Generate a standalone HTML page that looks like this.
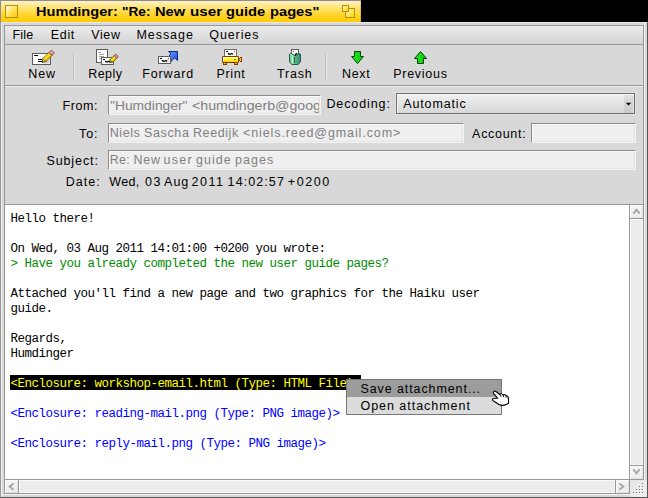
<!DOCTYPE html>
<html><head><meta charset="utf-8">
<style>
*{margin:0;padding:0;box-sizing:border-box}
html,body{width:648px;height:498px;overflow:hidden;background:#000}
body{position:relative;font-family:"Liberation Sans",sans-serif;font-size:12px;color:#000}
.a{position:absolute}
.t{position:absolute;white-space:pre;transform-origin:0 0;line-height:14px;font-size:12px}
.m{position:absolute;white-space:pre;font-family:"Liberation Mono",monospace;font-size:12.5px;line-height:15px;letter-spacing:-0.5011px}
.fld{position:absolute;background:#efefef;border-top:1px solid #8c8c8c;border-left:1px solid #8c8c8c;border-bottom:1px solid #f4f4f4;border-right:1px solid #f4f4f4;box-shadow:inset 1px 1px 0 #f8f8f8,inset -1px -1px 0 #e4e4e4}
svg{position:absolute;overflow:visible}
</style></head><body>
<div class="a" style="left:0;top:0;width:361px;height:22px;background:#8c8c94"></div>
<div class="a" style="left:1px;top:1px;width:359px;height:21px;background:linear-gradient(#fff2c4 0%,#ffe47a 30%,#ffd633 62%,#ffca00 100%)"></div>
<div class="a" style="left:360px;top:1px;width:1px;height:21px;background:linear-gradient(#e8d898,#d8a800)"></div>
<div class="a" style="left:5px;top:5px;width:13px;height:13px;border:1px solid #b89000;background:linear-gradient(135deg,#fffff4,#ffe050 55%,#ffc800)"></div>
<div class="t" style="left:35.73px;top:5px;color:#000;transform:scaleX(1.1662);font-size:12.5px;font-weight:bold;">Humdinger:</div>
<div class="t" style="left:121.71px;top:5px;color:#000;transform:scaleX(1.0917);font-size:12.5px;font-weight:bold;">"Re:</div>
<div class="t" style="left:154.63px;top:5px;color:#000;transform:scaleX(1.1720);font-size:12.5px;font-weight:bold;">New</div>
<div class="t" style="left:189.58px;top:5px;color:#000;transform:scaleX(1.2200);font-size:12.5px;font-weight:bold;">user</div>
<div class="t" style="left:225.92px;top:5px;color:#000;transform:scaleX(1.1750);font-size:12.5px;font-weight:bold;">guide</div>
<div class="t" style="left:270.12px;top:5px;color:#000;transform:scaleX(1.1750);font-size:12.5px;font-weight:bold;">pages"</div>
<div class="a" style="left:345px;top:8px;width:10px;height:10px;border:1px solid #b89000;background:linear-gradient(135deg,#fff6c8,#ffd000)"></div>
<div class="a" style="left:342px;top:5px;width:7px;height:7px;border:1px solid #b89000;background:linear-gradient(135deg,#fff6c8,#ffd000)"></div>
<div class="a" style="left:0;top:22px;width:648px;height:476px;background:#d8d8d8;border-left:1px solid #989898;border-top:1px solid #989898;border-right:1px solid #555;border-bottom:1px solid #555"></div>
<div class="a" style="left:1px;top:22px;width:646px;height:1px;background:#e6e6ee"></div>
<div class="a" style="left:1px;top:23px;width:1px;height:474px;background:#f0f0f0"></div>
<div class="a" style="left:644px;top:23px;width:1px;height:474px;background:#f2f2f2"></div>
<div class="a" style="left:1px;top:494px;width:646px;height:1px;background:#f2f2f2"></div>
<div class="a" style="left:4px;top:25px;width:640px;height:469px;background:#989898"></div>
<div class="a" style="left:5px;top:26px;width:638px;height:18px;background:linear-gradient(#ececec,#d4d4d4)"></div>
<div class="t" style="left:12.50px;top:28px;color:#000;letter-spacing:0.200px;font-size:12.5px;font-weight:normal;">File</div>
<div class="t" style="left:50.70px;top:28px;color:#000;letter-spacing:0.700px;font-size:12.5px;font-weight:normal;">Edit</div>
<div class="t" style="left:91.20px;top:28px;color:#000;letter-spacing:0.633px;font-size:12.5px;font-weight:normal;">View</div>
<div class="t" style="left:136.40px;top:28px;color:#000;letter-spacing:0.967px;font-size:12.5px;font-weight:normal;">Message</div>
<div class="t" style="left:209.30px;top:28px;color:#000;letter-spacing:0.900px;font-size:12.5px;font-weight:normal;">Queries</div>
<div class="a" style="left:5px;top:45px;width:638px;height:40px;background:#d8d8d8"></div>
<div class="a" style="left:5px;top:86px;width:638px;height:1px;background:#f0f0f0"></div>
<div class="a" style="left:73px;top:52px;width:1px;height:28px;background:#c0c0c0;box-shadow:1px 0 0 #e4e4e4"></div>
<div class="a" style="left:325px;top:52px;width:1px;height:28px;background:#c0c0c0;box-shadow:1px 0 0 #e4e4e4"></div>
<div class="t" style="left:28.25px;top:67px;color:#000;letter-spacing:0.875px;font-size:12.5px;font-weight:normal;">New</div>
<div class="t" style="left:88.25px;top:67px;color:#000;letter-spacing:0.438px;font-size:12.5px;font-weight:normal;">Reply</div>
<div class="t" style="left:142.20px;top:67px;color:#000;letter-spacing:0.867px;font-size:12.5px;font-weight:normal;">Forward</div>
<div class="t" style="left:216.50px;top:67px;color:#000;letter-spacing:0.625px;font-size:12.5px;font-weight:normal;">Print</div>
<div class="t" style="left:277.00px;top:67px;color:#000;letter-spacing:0.812px;font-size:12.5px;font-weight:normal;">Trash</div>
<div class="t" style="left:342.00px;top:67px;color:#000;letter-spacing:0.667px;font-size:12.5px;font-weight:normal;">Next</div>
<div class="t" style="left:393.25px;top:67px;color:#000;letter-spacing:0.714px;font-size:12.5px;font-weight:normal;">Previous</div>
<svg class="a" style="left:0;top:0" width="648" height="90" viewBox="0 0 648 90"><rect x="32" y="53" width="19" height="12" fill="#5c5c5c" /><rect x="33" y="54" width="17" height="10" fill="#ffffff" /><path d="M43,63.5 L49.5,57 L49.5,63.5 Z" fill="#d0d0d0"/><rect x="34" y="55" width="4" height="1" fill="#000" /><rect x="38" y="59" width="4" height="1" fill="#000" /><rect x="38" y="61" width="4" height="1" fill="#000" /><g transform="translate(42,62.5) rotate(-45)"><path d="M0,0 L3.41,-2.15 L3.41,2.15 Z" fill="#e0b080" stroke="#5a5a00" stroke-width="0.8"/><path d="M0,0 L1.364,-0.86 L1.364,0.86 Z" fill="#202020"/><rect x="3.41" y="-2.15" width="8.68" height="4.3" fill="#ffc400" stroke="#5a5a00" stroke-width="0.8"/><rect x="3.41" y="-1.5499999999999998" width="8.68" height="1.2899999999999998" fill="#ffe040"/><rect x="12.09" y="-2.15" width="3.41" height="4.3" rx="1" fill="#e8a0b0" stroke="#803040" stroke-width="0.8"/></g><rect x="96" y="49" width="12" height="14" fill="#5c5c5c" /><rect x="97" y="50" width="10" height="12" fill="#ffffff" /><rect x="98" y="52" width="3" height="1" fill="#a8a8a8" /><rect x="99" y="54" width="5" height="1" fill="#a8a8a8" /><rect x="99" y="56" width="5" height="1" fill="#a8a8a8" /><rect x="99" y="58" width="2" height="1" fill="#a8a8a8" /><rect x="101" y="57" width="13" height="8" fill="#5c5c5c" /><rect x="102" y="58" width="11" height="6" fill="#ffffff" /><path d="M106,63.5 L112.5,58 L112.5,63.5 Z" fill="#d8d8d8"/><rect x="103" y="59" width="2" height="1" fill="#000" /><path d="M105,61 Q106.5,62.5 108,61.5 Q109.5,61 110.5,62" fill="none" stroke="#000" stroke-width="1.3"/><g transform="translate(109.8,62.5) rotate(-45)"><path d="M0,0 L2.266,-1.9 L2.266,1.9 Z" fill="#e0b080" stroke="#5a5a00" stroke-width="0.8"/><path d="M0,0 L0.9064000000000001,-0.76 L0.9064000000000001,0.76 Z" fill="#202020"/><rect x="2.266" y="-1.9" width="5.768000000000001" height="3.8" fill="#ffc400" stroke="#5a5a00" stroke-width="0.8"/><rect x="2.266" y="-1.2999999999999998" width="5.768000000000001" height="1.14" fill="#ffe040"/><rect x="8.034" y="-1.9" width="2.266" height="3.8" rx="1" fill="#e8a0b0" stroke="#803040" stroke-width="0.8"/></g><defs><linearGradient id="bl" x1="0" y1="0" x2="1" y2="1"><stop offset="0" stop-color="#70a0ff"/><stop offset="1" stop-color="#1848e0"/></linearGradient><linearGradient id="gr" x1="0" y1="0" x2="1" y2="0"><stop offset="0" stop-color="#20f020"/><stop offset="1" stop-color="#10c010"/></linearGradient><linearGradient id="yl" x1="0" y1="0" x2="0" y2="1"><stop offset="0" stop-color="#ffff90"/><stop offset="0.5" stop-color="#ffee30"/><stop offset="0.8" stop-color="#ffe020"/><stop offset="1" stop-color="#ffb800"/></linearGradient><linearGradient id="tg" x1="0" y1="0" x2="1" y2="0"><stop offset="0" stop-color="#70c880"/><stop offset="0.25" stop-color="#a0e8b0"/><stop offset="0.5" stop-color="#58b878"/><stop offset="1" stop-color="#3a9068"/></linearGradient></defs><path d="M168.5,51.5 H177.5 V60.5 L174.5,57.8 L171,61.5 L170,56.5 L169.3,55.2 L171,53.8 Z" fill="url(#bl)" stroke="#002a80" stroke-width="1"/><rect x="158" y="56" width="13" height="8" fill="#5c5c5c" /><rect x="159" y="57" width="11" height="6" fill="#ffffff" /><path d="M163,62.5 L169.5,57 L169.5,62.5 Z" fill="#dcdcdc"/><rect x="160" y="58" width="2" height="1" fill="#000" /><rect x="168" y="58" width="1" height="1" fill="#ff2040" /><path d="M162,60.2 Q163.5,61.8 165,60.8 Q166.2,60.3 167,61.3" fill="none" stroke="#000" stroke-width="1.3"/><rect x="224" y="49" width="13" height="9" fill="#6c6c6c" /><rect x="225" y="50" width="11" height="7" fill="#ffffff" /><rect x="226" y="51" width="2" height="1" fill="#000" /><rect x="234" y="51" width="1" height="1" fill="#ff2040" /><path d="M228,53.2 Q229.5,54.8 231,53.8 Q232.2,53.3 233,54.3" fill="none" stroke="#000" stroke-width="1.3"/><rect x="223" y="62" width="4" height="3" fill="#7a3a00" /><rect x="234" y="62" width="4" height="3" fill="#7a3a00" /><rect x="224" y="63" width="2" height="1" fill="#ffb000" /><rect x="235" y="63" width="2" height="1" fill="#ffb000" /><path d="M238,58 H240 V57 H242 V62 H240 V61 H238 Z" fill="#7a3a00"/><rect x="239" y="59" width="1" height="1" fill="#ffb000" /><rect x="240" y="58" width="1" height="3" fill="#ffd040" /><path d="M223,56 H238 L239,57 V62 L238,63 H223 L222,62 V57 Z" fill="#7a3a00"/><rect x="223" y="57" width="15" height="5" fill="url(#yl)"/><rect x="223" y="57" width="1" height="4" fill="#fffff0" /><rect x="234" y="59" width="2" height="1" fill="#20a040" /><rect x="291" y="49" width="8" height="9" fill="#5c5c5c" /><rect x="292" y="50" width="6" height="7" fill="#ffffff" /><rect x="293" y="51" width="1" height="1" fill="#ff2040" /><path d="M289,54 L291,53 L295,55 L299,53 L301,54 L301,62 L299,64 L298,65 L292,65 L291,64 L289,62 Z" fill="#1f5f5f"/><path d="M290,55 L291,54 L295,56 L299,54 L300,55 L300,62 L298,64 L292,64 L290,62 Z" fill="url(#tg)"/><rect x="294" y="57" width="1" height="6" fill="#1f5f5f" /><rect x="298" y="57" width="1" height="6" fill="#5a8aa0" /><rect x="292" y="57" width="1" height="5" fill="#c8ffc8" /><rect x="290" y="54" width="2" height="1" fill="#90ff90" /><path d="M295.3,55.5 Q295.5,53.5 297,53.6" fill="none" stroke="#000" stroke-width="1.3"/><path d="M354.5,51.5 H360.5 V56.5 H363.5 L357.5,63.5 L351.5,56.5 H354.5 Z" fill="url(#gr)" stroke="#004000" stroke-width="1"/><path d="M420.5,51.5 L426.5,58.5 H423.5 V63.5 H417.5 V58.5 H414.5 Z" fill="url(#gr)" stroke="#004000" stroke-width="1"/></svg>
<div class="a" style="left:5px;top:87px;width:638px;height:117px;background:#d8d8d8"></div>
<div class="t" style="left:62.50px;top:99px;color:#000;letter-spacing:0.575px;font-size:12.5px;font-weight:normal;">From:</div>
<div class="fld" style="left:108px;top:95px;width:213px;height:20px"></div>
<div class="a" style="left:109px;top:96px;width:210px;height:18px;overflow:hidden"><div class="t" style="left:0.75px;top:3px;color:#808080;transform:scaleX(1.1530)">"Humdinger"</div><div class="t" style="left:82.62px;top:3px;color:#808080;transform:scaleX(1.1803)">&lt;humdingerb@googlemail.com&gt;</div></div>
<div class="t" style="left:326.40px;top:97px;color:#000;letter-spacing:0.900px;font-size:12.5px;font-weight:normal;">Decoding:</div>
<div class="a" style="left:395px;top:92px;width:241px;height:23px;background:#e2e2e2"></div>
<div class="a" style="left:396px;top:93px;width:239px;height:21px;border:1px solid #6c6c6c;background:linear-gradient(#f0f0f0,#d8d8d8)"></div>
<div class="a" style="left:397px;top:94px;width:237px;height:1px;background:#fafafa"></div>
<div class="a" style="left:397px;top:94px;width:1px;height:19px;background:#f8f8f8"></div>
<div class="a" style="left:624px;top:95px;width:10px;height:18px;background:linear-gradient(#e0e0e0,#c8c8c8)"></div>
<div class="a" style="left:633px;top:95px;width:1px;height:18px;background:#e4e4e4"></div>
<svg class="a" style="left:620px;top:98px" width="16" height="12" viewBox="620 98 16 12"><path d="M625.8,102.8 H631.2 L628.5,105.6 Z" fill="#000"/></svg>
<div class="t" style="left:403.20px;top:97px;color:#000;letter-spacing:0.875px;font-size:12.5px;font-weight:normal;">Automatic</div>
<div class="t" style="left:79.00px;top:127px;color:#000;letter-spacing:0.900px;font-size:12.5px;font-weight:normal;">To:</div>
<div class="fld" style="left:108px;top:123px;width:356px;height:20px"></div>
<div class="t" style="left:109.80px;top:126px;color:#808080;letter-spacing:0.550px;font-size:12.5px;font-weight:normal;">Niels</div>
<div class="t" style="left:144.00px;top:126px;color:#808080;letter-spacing:0.640px;font-size:12.5px;font-weight:normal;">Sascha</div>
<div class="t" style="left:193.00px;top:126px;color:#808080;letter-spacing:0.583px;font-size:12.5px;font-weight:normal;">Reedijk</div>
<div class="t" style="left:243.00px;top:126px;color:#808080;letter-spacing:0.895px;font-size:12.5px;font-weight:normal;">&lt;niels.reed@gmail.com&gt;</div>
<div class="t" style="left:472.10px;top:127px;color:#000;letter-spacing:0.700px;font-size:12.5px;font-weight:normal;">Account:</div>
<div class="fld" style="left:531px;top:123px;width:105px;height:20px"></div>
<div class="t" style="left:46.40px;top:154px;color:#000;letter-spacing:0.914px;font-size:12.5px;font-weight:normal;">Subject:</div>
<div class="fld" style="left:108px;top:150px;width:528px;height:20px"></div>
<div class="t" style="left:109.70px;top:153px;color:#808080;letter-spacing:0.350px;font-size:12.5px;font-weight:normal;">Re:</div>
<div class="t" style="left:133.60px;top:153px;color:#808080;letter-spacing:0.700px;font-size:12.5px;font-weight:normal;">New</div>
<div class="t" style="left:163.60px;top:153px;color:#808080;letter-spacing:1.233px;font-size:12.5px;font-weight:normal;">user</div>
<div class="t" style="left:196.10px;top:153px;color:#808080;letter-spacing:1.000px;font-size:12.5px;font-weight:normal;">guide</div>
<div class="t" style="left:234.90px;top:153px;color:#808080;letter-spacing:1.075px;font-size:12.5px;font-weight:normal;">pages</div>
<div class="t" style="left:65.70px;top:175px;color:#000;letter-spacing:1.025px;font-size:12.5px;font-weight:normal;">Date:</div>
<div class="t" style="left:109.20px;top:175px;color:#000;letter-spacing:0.400px;font-size:12.5px;font-weight:normal;">Wed,</div>
<div class="t" style="left:144.90px;top:175px;color:#000;letter-spacing:1.600px;font-size:12.5px;font-weight:normal;">03</div>
<div class="t" style="left:164.10px;top:175px;color:#000;letter-spacing:0.950px;font-size:12.5px;font-weight:normal;">Aug</div>
<div class="t" style="left:191.40px;top:175px;color:#000;letter-spacing:1.567px;font-size:12.5px;font-weight:normal;">2011</div>
<div class="t" style="left:227.60px;top:175px;color:#000;letter-spacing:1.086px;font-size:12.5px;font-weight:normal;">14:02:57</div>
<div class="t" style="left:287.80px;top:175px;color:#000;letter-spacing:1.575px;font-size:12.5px;font-weight:normal;">+0200</div>
<div class="a" style="left:5px;top:205px;width:624px;height:274px;background:#fff"></div>
<div class="a" style="left:10px;top:375px;width:351px;height:15px;background:#000"></div>
<div class="m" style="left:10.5px;top:212px;color:#000">Hello there!</div>
<div class="m" style="left:10.5px;top:242px;color:#000">On Wed, 03 Aug 2011 14:01:00 +0200 you wrote:</div>
<div class="m" style="left:10.5px;top:257px;color:#008c00">&gt; Have you already completed the new user guide pages?</div>
<div class="m" style="left:10.5px;top:287px;color:#000">Attached you'll find a new page and two graphics for the Haiku user</div>
<div class="m" style="left:10.5px;top:302px;color:#000">guide.</div>
<div class="m" style="left:10.5px;top:332px;color:#000">Regards,</div>
<div class="m" style="left:10.5px;top:347px;color:#000">Humdinger</div>
<div class="m" style="left:10.5px;top:377px;color:#ffff00">&lt;Enclosure: workshop-email.html (Type: HTML File)&gt;</div>
<div class="m" style="left:10.5px;top:407px;color:#0000ff">&lt;Enclosure: reading-mail.png (Type: PNG image)&gt;</div>
<div class="m" style="left:10.5px;top:437px;color:#0000ff">&lt;Enclosure: reply-mail.png (Type: PNG image)&gt;</div>
<div class="a" style="left:630px;top:205px;width:13px;height:13px;background:linear-gradient(#f4f4f4,#ececec);box-shadow:inset 1px 1px 0 #fcfcfc,inset -1px -1px 0 #e2e2e2"></div>
<div class="a" style="left:630px;top:218px;width:13px;height:1px;background:#989898;"></div>
<div class="a" style="left:630px;top:219px;width:13px;height:246px;background:#ececec;box-shadow:inset 1px 1px 0 #fafafa,inset -1px -1px 0 #f6f6f6"></div>
<div class="a" style="left:630px;top:465px;width:13px;height:1px;background:#989898;"></div>
<div class="a" style="left:630px;top:466px;width:13px;height:13px;background:linear-gradient(#f4f4f4,#ececec);box-shadow:inset 1px 1px 0 #fcfcfc,inset -1px -1px 0 #e2e2e2"></div>
<div class="a" style="left:629px;top:479px;width:15px;height:1px;background:#989898;"></div>
<div class="a" style="left:5px;top:480px;width:13px;height:13px;background:linear-gradient(#f4f4f4,#ececec);box-shadow:inset 1px 1px 0 #fcfcfc,inset -1px -1px 0 #e2e2e2"></div>
<div class="a" style="left:18px;top:480px;width:1px;height:13px;background:#989898;"></div>
<div class="a" style="left:19px;top:480px;width:596px;height:13px;background:#ececec;box-shadow:inset 1px 1px 0 #fafafa,inset -1px -1px 0 #f6f6f6"></div>
<div class="a" style="left:615px;top:480px;width:1px;height:13px;background:#989898;"></div>
<div class="a" style="left:616px;top:480px;width:13px;height:13px;background:linear-gradient(#f4f4f4,#ececec);box-shadow:inset 1px 1px 0 #fcfcfc,inset -1px -1px 0 #e2e2e2"></div>
<div class="a" style="left:629px;top:480px;width:1px;height:14px;background:#989898;"></div>
<div class="a" style="left:630px;top:480px;width:17px;height:17px;background:linear-gradient(135deg,#e4e4e4,#f0f0f0);"></div>
<svg class="a" style="left:0;top:200px" width="648" height="298" viewBox="0 200 648 298"><path d="M633.4,213.6 L636.5,209.6 L639.6,213.6" fill="none" stroke="#a4a4a4" stroke-width="1.8" stroke-linejoin="miter"/><path d="M633.4,469.4 L636.5,473.4 L639.6,469.4" fill="none" stroke="#a4a4a4" stroke-width="1.8" stroke-linejoin="miter"/><path d="M13.6,483.4 L9.6,486.5 L13.6,489.6" fill="none" stroke="#a4a4a4" stroke-width="1.8" stroke-linejoin="miter"/><path d="M619.4,483.4 L623.4,486.5 L619.4,489.6" fill="none" stroke="#a4a4a4" stroke-width="1.8" stroke-linejoin="miter"/><rect x="643" y="484" width="1" height="1" fill="#ffffff"/><rect x="642" y="483" width="1" height="1" fill="#6c6c6c"/><rect x="643" y="487" width="1" height="1" fill="#ffffff"/><rect x="642" y="486" width="1" height="1" fill="#6c6c6c"/><rect x="640" y="487" width="1" height="1" fill="#ffffff"/><rect x="639" y="486" width="1" height="1" fill="#6c6c6c"/><rect x="643" y="490" width="1" height="1" fill="#ffffff"/><rect x="642" y="489" width="1" height="1" fill="#6c6c6c"/><rect x="640" y="490" width="1" height="1" fill="#ffffff"/><rect x="639" y="489" width="1" height="1" fill="#6c6c6c"/><rect x="637" y="490" width="1" height="1" fill="#ffffff"/><rect x="636" y="489" width="1" height="1" fill="#6c6c6c"/><rect x="643" y="493" width="1" height="1" fill="#ffffff"/><rect x="642" y="492" width="1" height="1" fill="#6c6c6c"/><rect x="640" y="493" width="1" height="1" fill="#ffffff"/><rect x="639" y="492" width="1" height="1" fill="#6c6c6c"/><rect x="637" y="493" width="1" height="1" fill="#ffffff"/><rect x="636" y="492" width="1" height="1" fill="#6c6c6c"/><rect x="634" y="493" width="1" height="1" fill="#ffffff"/><rect x="633" y="492" width="1" height="1" fill="#6c6c6c"/></svg>
<div class="a" style="left:346px;top:379px;width:156px;height:36px;border:1px solid #767676;background:#dcdcdc"></div>
<div class="a" style="left:347px;top:380px;width:154px;height:17px;background:#9c9c9c"></div>
<div class="t" style="left:360.50px;top:382px;color:#000;letter-spacing:0.900px;font-size:12.5px;font-weight:normal;">Save attachment...</div>
<div class="t" style="left:360.50px;top:399px;color:#000;letter-spacing:0.964px;font-size:12.5px;font-weight:normal;">Open attachment</div>
<svg class="a" style="left:480px;top:380px" width="40" height="40" viewBox="480 380 40 40"><path d="M494.5,391 C493,391.5 493,393 494,394 L497.5,398 L493.5,398.5 C492,399 492,400.5 493.5,401 L499,404.5 C501,405.5 504,405.5 506,404.5 L508.5,403.5 L508.5,399 C508.5,397 507.5,396 506,395.5 C505,394.5 503.5,394.5 503,395 C502,393.5 500.5,393.5 499.5,394.5 L496,391.5 C495.5,391 495,391 494.5,391 Z" fill="#fff" stroke="#000" stroke-width="1.1"/><path d="M500.3,394.6 L501,396.8 M503.2,395 L503.7,397.2 M506,395.6 L506.2,397.6" stroke="#000" stroke-width="0.9" fill="none"/></svg>
</body></html>
